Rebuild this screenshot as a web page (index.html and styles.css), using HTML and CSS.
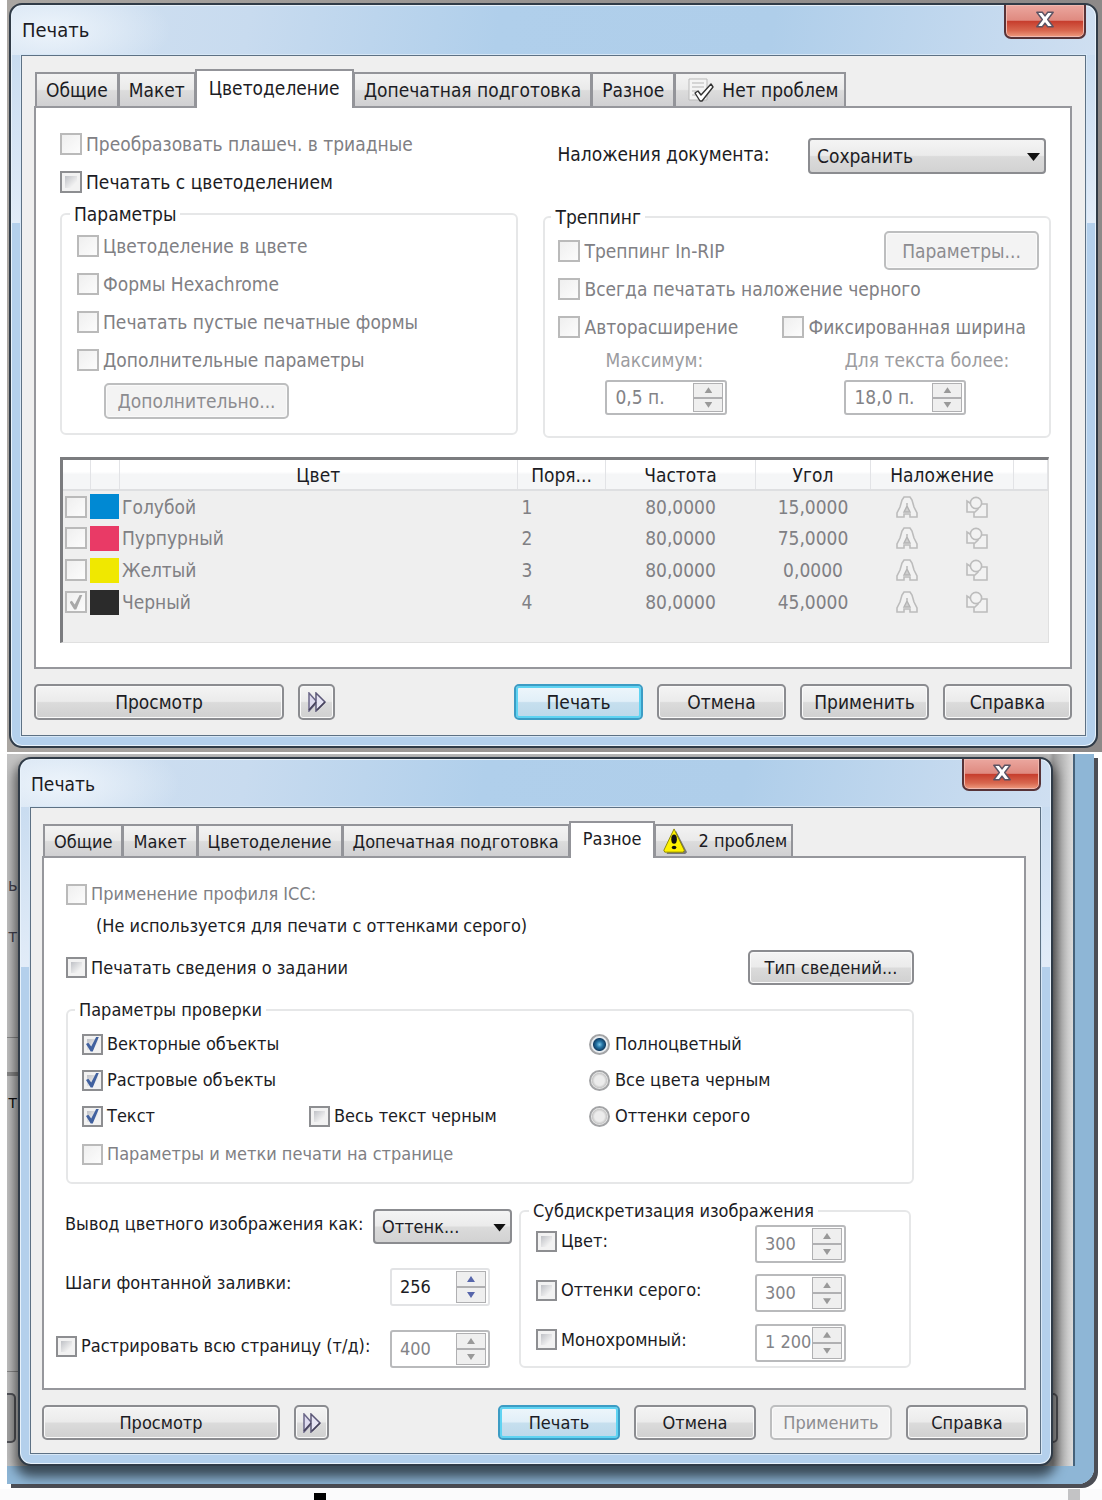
FILE: index.html
```html
<!DOCTYPE html>
<html lang="ru">
<head>
<meta charset="utf-8">
<title>Печать</title>
<meta name="viewport" content="width=device-width, initial-scale=1">
<link rel="stylesheet" href="styles.css">
</head>
<body>
<svg class="sprite" aria-hidden="true">
  <symbol id="i-close" viewBox="0 0 22 18"><path d="M2 1h6l3 4 3-4h6l-6 8 6 8h-6l-3-4-3 4H2l6-8z" fill="#fff" stroke="#5b5363" stroke-width="1.6" stroke-linejoin="round"/></symbol>
  <symbol id="i-next" viewBox="0 0 20 20"><path d="M2 1l8 9-8 9z" fill="#dedbef" stroke="#6b6788" stroke-width="1.5"/><path d="M9 1l9 9-9 9z" fill="#e6e4f3" stroke="#5c5878" stroke-width="1.5"/><path d="M10 18l8-8M2 18l7-8" fill="none" stroke="#47435c" stroke-width="1.5"/></symbol>
  <symbol id="i-ok" viewBox="0 0 26 24"><path d="M1 1h18v21H1z" fill="#f4f4f4" stroke="#b9b9b9"/><path d="M4 5h12M4 9h12M4 13h5M4 17h4" stroke="#b5b5b5"/><path d="M7 15l3-2 3 4L23 6l2 3-11 14h-2z" fill="#fff" stroke="#333" stroke-width="1.4" stroke-linejoin="round"/></symbol>
  <symbol id="i-warn" viewBox="0 0 26 28"><path d="M14 3l12 23-2 2H4z" fill="#777"/><path d="M12 1l11 23-1 2H2l-1-2z" fill="#fff200" stroke="#8a8500" stroke-linejoin="round"/><ellipse cx="12" cy="12" rx="3" ry="5" fill="#111"/><ellipse cx="12" cy="21" rx="2.5" ry="1.8" fill="#111"/></symbol>
  <symbol id="i-text" viewBox="0 0 22 22"><path d="M8 1h6l2 3 2 7 3 6v4h-7v-3H8v3H1v-4l3-6 2-7z" fill="#f2f2f2" stroke="#bcbcbc" stroke-width="1.6"/><path d="M11 7v3M11 10l-3 6h6z" fill="#cfcfcf" stroke="#b4b4b4" stroke-width="1.4"/></symbol>
  <symbol id="i-shape" viewBox="0 0 22 22"><path d="M8 8h13v13H8z" fill="#f2f2f2" stroke="#bcbcbc" stroke-width="1.6"/><path d="M1 5v11h8l3-3-2-2z" fill="#f2f2f2" stroke="#bcbcbc" stroke-width="1.6"/><circle cx="10" cy="7" r="5.6" fill="#f2f2f2" stroke="#bcbcbc" stroke-width="1.6"/></symbol>
</svg>

<main>
<div class="scene scene-first">
<section class="dialog" aria-label="Печать, цветоделение">
  <header class="titlebar">
    <h1>Печать</h1>
    <button class="close" type="button" aria-label="Закрыть"><svg><use href="#i-close"/></svg></button>
  </header>
  <form class="client">
    <div class="tabs" role="tablist">
      <button type="button" class="tab" role="tab">Общие</button>
      <button type="button" class="tab" role="tab">Макет</button>
      <button type="button" class="tab active" role="tab" aria-selected="true">Цветоделение</button>
      <button type="button" class="tab" role="tab">Допечатная подготовка</button>
      <button type="button" class="tab" role="tab">Разное</button>
      <button type="button" class="tab tab-status" role="tab"><svg><use href="#i-ok"/></svg>Нет проблем</button>
    </div>
    <div class="panel separations">
      <div class="columns">
        <div>
          <div class="stack">
            <label class="check"><input type="checkbox" disabled>Преобразовать плашеч. в триадные</label>
            <label class="check"><input type="checkbox">Печатать с цветоделением</label>
          </div>
          <fieldset class="options">
            <legend>Параметры</legend>
            <div class="stack">
              <label class="check"><input type="checkbox" disabled>Цветоделение в цвете</label>
              <label class="check"><input type="checkbox" disabled>Формы Hexachrome</label>
              <label class="check"><input type="checkbox" disabled>Печатать пустые печатные формы</label>
              <label class="check"><input type="checkbox" disabled>Дополнительные параметры</label>
            </div>
            <button type="button" class="btn btn-more" disabled>Дополнительно...</button>
          </fieldset>
        </div>
        <div>
          <div class="overprint">
            <label for="overprint">Наложения документа:</label>
            <span class="combo"><select id="overprint"><option>Сохранить</option></select></span>
          </div>
          <fieldset class="trapping">
            <legend>Треппинг</legend>
            <div class="rip">
              <label class="check"><input type="checkbox" disabled>Треппинг In-RIP</label>
              <button type="button" class="btn" disabled>Параметры...</button>
            </div>
            <label class="check always"><input type="checkbox" disabled>Всегда печатать наложение черного</label>
            <div class="pair">
              <div>
                <label class="check"><input type="checkbox" disabled>Авторасширение</label>
                <div class="limit">
                  <label for="maximum">Максимум:</label>
                  <span class="spin off"><input id="maximum" value="0,5 п." disabled><span class="arrows"><button type="button" class="up" aria-label="Больше" disabled></button><button type="button" class="down" aria-label="Меньше" disabled></button></span></span>
                </div>
              </div>
              <div>
                <label class="check"><input type="checkbox" disabled>Фиксированная ширина</label>
                <div class="limit limit-wide">
                  <label for="textsize">Для текста более:</label>
                  <span class="spin off"><input id="textsize" value="18,0 п." disabled><span class="arrows"><button type="button" class="up" aria-label="Больше" disabled></button><button type="button" class="down" aria-label="Меньше" disabled></button></span></span>
                </div>
              </div>
            </div>
          </fieldset>
        </div>
      </div>
      <div class="plates">
        <table>
          <colgroup><col class="c-check"><col class="c-swatch"><col><col class="c-order"><col class="c-freq"><col class="c-angle"><col class="c-over"><col class="c-end"></colgroup>
          <thead><tr><th></th><th></th><th>Цвет</th><th>Поря...</th><th>Частота</th><th>Угол</th><th>Наложение</th><th></th></tr></thead>
          <tbody>
            <tr><td><input type="checkbox" aria-label="Голубой" disabled></td><td><i class="swatch cyan"></i></td><td>Голубой</td><td>1</td><td>80,0000</td><td>15,0000</td><td><div class="over"><svg><use href="#i-text"/></svg><svg><use href="#i-shape"/></svg></div></td><td></td></tr>
            <tr><td><input type="checkbox" aria-label="Пурпурный" disabled></td><td><i class="swatch magenta"></i></td><td>Пурпурный</td><td>2</td><td>80,0000</td><td>75,0000</td><td><div class="over"><svg><use href="#i-text"/></svg><svg><use href="#i-shape"/></svg></div></td><td></td></tr>
            <tr><td><input type="checkbox" aria-label="Желтый" disabled></td><td><i class="swatch yellow"></i></td><td>Желтый</td><td>3</td><td>80,0000</td><td>0,0000</td><td><div class="over"><svg><use href="#i-text"/></svg><svg><use href="#i-shape"/></svg></div></td><td></td></tr>
            <tr><td><input type="checkbox" aria-label="Черный" checked disabled></td><td><i class="swatch black"></i></td><td>Черный</td><td>4</td><td>80,0000</td><td>45,0000</td><td><div class="over"><svg><use href="#i-text"/></svg><svg><use href="#i-shape"/></svg></div></td><td></td></tr>
          </tbody>
        </table>
      </div>
    </div>
    <footer class="actions">
      <button type="button" class="btn preview">Просмотр</button>
      <button type="button" class="btn expand" aria-label="Показать просмотр"><svg><use href="#i-next"/></svg></button>
      <button type="button" class="btn primary">Печать</button>
      <button type="button" class="btn">Отмена</button>
      <button type="button" class="btn">Применить</button>
      <button type="button" class="btn">Справка</button>
    </footer>
  </form>
</section>
</div>

<div class="scene scene-second">
<div class="behind" aria-hidden="true">
  <span class="piece piece-a">ь</span>
  <span class="piece piece-b">т</span>
  <span class="piece piece-c">т</span>
  <i class="rule rule-a"></i><i class="rule rule-b"></i><i class="rule rule-c"></i>
  <i class="stub stub-left"></i><i class="stub stub-right"></i>
</div>
<section class="dialog compact" aria-label="Печать, разное">
  <header class="titlebar">
    <h1>Печать</h1>
    <button class="close" type="button" aria-label="Закрыть"><svg><use href="#i-close"/></svg></button>
  </header>
  <form class="client">
    <div class="tabs" role="tablist">
      <button type="button" class="tab" role="tab">Общие</button>
      <button type="button" class="tab" role="tab">Макет</button>
      <button type="button" class="tab" role="tab">Цветоделение</button>
      <button type="button" class="tab" role="tab">Допечатная подготовка</button>
      <button type="button" class="tab active" role="tab" aria-selected="true">Разное</button>
      <button type="button" class="tab tab-status" role="tab"><svg><use href="#i-warn"/></svg>2 проблем</button>
    </div>
    <div class="panel misc">
      <div class="upper">
        <label class="check"><input type="checkbox" disabled>Применение профиля ICC:</label>
        <p class="note">(Не используется для печати с оттенками серого)</p>
        <div class="job">
          <label class="check"><input type="checkbox">Печатать сведения о задании</label>
          <button type="button" class="btn">Тип сведений...</button>
        </div>
        <fieldset class="proof">
          <legend>Параметры проверки</legend>
          <div class="proof-grid">
            <label class="check"><input type="checkbox" checked>Векторные объекты</label>
            <label class="check mode"><input type="radio" name="mode" checked>Полноцветный</label>
            <label class="check"><input type="checkbox" checked>Растровые объекты</label>
            <label class="check mode"><input type="radio" name="mode">Все цвета черным</label>
            <label class="check"><input type="checkbox" checked>Текст</label>
            <label class="check"><input type="checkbox">Весь текст черным</label>
            <label class="check mode"><input type="radio" name="mode">Оттенки серого</label>
            <label class="check marks"><input type="checkbox" disabled>Параметры и метки печати на странице</label>
          </div>
        </fieldset>
      </div>
      <div class="lower">
        <div class="output">
          <div class="line line-color"><label for="colorout">Вывод цветного изображения как:</label><span class="combo"><select id="colorout"><option>Оттенк...</option></select></span></div>
          <div class="line"><label for="steps">Шаги фонтанной заливки:</label><span class="spin live"><input id="steps" value="256"><span class="arrows"><button type="button" class="up" aria-label="Больше"></button><button type="button" class="down" aria-label="Меньше"></button></span></span></div>
          <div class="line line-raster"><label class="check"><input type="checkbox">Растрировать всю страницу (т/д):</label><span class="spin off"><input aria-label="Разрешение страницы" value="400" disabled><span class="arrows"><button type="button" class="up" aria-label="Больше" disabled></button><button type="button" class="down" aria-label="Меньше" disabled></button></span></span></div>
        </div>
        <fieldset class="sampling">
          <legend>Субдискретизация изображения</legend>
          <div class="line"><label class="check"><input type="checkbox">Цвет:</label><span class="spin off"><input aria-label="Цвет" value="300" disabled><span class="arrows"><button type="button" class="up" aria-label="Больше" disabled></button><button type="button" class="down" aria-label="Меньше" disabled></button></span></span></div>
          <div class="line"><label class="check"><input type="checkbox">Оттенки серого:</label><span class="spin off"><input aria-label="Оттенки серого" value="300" disabled><span class="arrows"><button type="button" class="up" aria-label="Больше" disabled></button><button type="button" class="down" aria-label="Меньше" disabled></button></span></span></div>
          <div class="line"><label class="check"><input type="checkbox">Монохромный:</label><span class="spin off"><input aria-label="Монохромный" value="1 200" disabled><span class="arrows"><button type="button" class="up" aria-label="Больше" disabled></button><button type="button" class="down" aria-label="Меньше" disabled></button></span></span></div>
        </fieldset>
      </div>
    </div>
    <footer class="actions">
      <button type="button" class="btn preview">Просмотр</button>
      <button type="button" class="btn expand" aria-label="Показать просмотр"><svg><use href="#i-next"/></svg></button>
      <button type="button" class="btn primary">Печать</button>
      <button type="button" class="btn">Отмена</button>
      <button type="button" class="btn" disabled>Применить</button>
      <button type="button" class="btn">Справка</button>
    </footer>
  </form>
</section>
</div>
<div class="page-edge"><i class="mark"></i><i class="guide"></i></div>
</main>
</body>
</html>
```
FILE: styles.css
```css
* { box-sizing: border-box; }

body {
  margin: 0;
  background: #fff;
  color: #1c1c24;
}

body, button, input, select {
  font-family: Tahoma, "DejaVu Sans Condensed", "Open Sans", sans-serif;
}

.sprite { position: absolute; width: 0; height: 0; }

/* Desktop strips */
.scene { margin-left: 7px; overflow: hidden; }
.scene-first {
  padding: 3px 4px 4px 2px;
  background: linear-gradient(90deg, #aaa6a2, #979391 50%, #8d8988);
}
.scene-second {
  position: relative;
  margin-top: 2px;
  padding: 3px 49px 23px 11px;
}

/* Window left behind the second dialog */
.behind {
  position: absolute;
  inset: 0 8px 5px 0;
  border: solid #8eb6d6;
  border-width: 0 19px 18px 0;
  border-radius: 0 0 16px 0;
  box-shadow: 4px 4px 0 #4c4e55;
  background: linear-gradient(90deg, #c2c2c2, #c6c6c6 12px, #bdbdbd calc(100% - 26px), #9b9b9b calc(100% - 22px), #dcdcdc calc(100% - 2px), #46627a calc(100% - 2px));
  font: 18px/24px "DejaVu Sans Condensed", sans-serif;
}
.piece { position: absolute; left: 1px; color: #46434f; }
.piece-a { top: 119px; }
.piece-b { top: 170px; }
.piece-c { top: 336px; color: #111; }
.rule { position: absolute; left: 0; width: 14px; height: 1px; background: #8a8a8a; }
.rule-a { top: 283px; }
.rule-b { top: 318px; height: 4px; }
.rule-c { top: 617px; }
.stub { position: absolute; top: 639px; height: 50px; border: 2px solid #55565b; background: #a6a6a6; }
.stub-left { left: 0; width: 9px; border-left: 0; border-radius: 0 5px 5px 0; }
.stub-right { right: 17px; width: 40px; border-radius: 5px; }

.page-edge {
  display: flex;
  justify-content: space-between;
  height: 11px;
  padding: 0 22px 0 314px;
  background: #fbfbfc;
}
.mark { width: 12px; height: 7px; margin-top: 4px; background: #000; }
.guide { width: 12px; background: #c3c3c5; }

/* Dialog frame */
.dialog {
  --text: 19px;
  --box: 22px;
  --split: 168px;
  --title: 50px;
  --control: 36px;
  --action: 129px;
  position: relative;
  padding: 0 10px 10px;
  border: 2px solid #303b47;
  border-radius: 13px;
  background:
    radial-gradient(120px 50px at 40px 25px, #edf4fb, transparent) 0 0 / 100% var(--title) no-repeat,
    linear-gradient(100deg, #d2e1f1, #c8dbef 22%, #b0cfeb 45%, #afceea 70%, #cfdff1) 0 0 / 100% var(--title) no-repeat,
    linear-gradient(#c9dcf0, #e2ecf8) 0 var(--title) / 100% var(--split) no-repeat,
    #b4d0ec;
  box-shadow: inset 0 0 0 1px #e8f2fb;
  font-size: var(--text);
}
.compact {
  --text: 18px;
  --box: 21px;
  --split: 160px;
  --title: 48px;
  --control: 35px;
  --action: 122px;
  box-shadow: inset 0 0 0 1px #e8f2fb, 0 8px 12px 3px rgb(0 0 0 / 60%);
}
.titlebar {
  display: flex;
  justify-content: space-between;
  align-items: flex-start;
  height: var(--title);
}
.titlebar h1 {
  margin: 0;
  padding-left: 1px;
  font-size: 20px;
  font-weight: 400;
  line-height: 50px;
}
.compact h1 { font-size: 19px; }
.close {
  display: grid;
  place-items: center;
  width: 82px;
  height: 34px;
  padding: 0 0 4px;
  border: 2px solid #573338;
  border-top: 0;
  border-radius: 0 0 7px 7px;
  background: linear-gradient(#eba79f, #df8a80 48%, #c63c2c 50%, #d8674f 80%, #ef9c80);
  box-shadow: inset 0 0 0 1px #f1b9b0;
}
.compact .close { width: 79px; height: 32px; }
.close svg { width: 20px; height: 17px; }

.client {
  margin: 0;
  padding: 13px 13px 15px 12px;
  border: 1px solid #5d7184;
  background: #efefef;
  box-shadow: 0 0 0 1px #d7e7f6;
}
.compact .client { padding: 13px 12px 13px 11px; }

/* Tabs */
.tabs { display: flex; align-items: flex-end; padding-left: 2px; }
.tab {
  height: 34px;
  margin: 0 0 0 -1px;
  padding: 0 9px;
  border: 2px solid #939499;
  border-bottom: 0;
  background: linear-gradient(#f3f3f3, #eaeaea 48%, #dcdcdc 52%, #d0d0d2);
  color: inherit;
  font-size: var(--text);
  line-height: 32px;
  white-space: nowrap;
}
.compact .tab { height: 32px; }
.tab.active {
  z-index: 1;
  height: 39px;
  margin-bottom: -2px;
  padding: 0 12px 4px;
  background: #fff;
}
.compact .tab.active { height: 37px; }
.tab-status { display: flex; align-items: center; gap: 8px; padding-left: 12px; padding-right: 6px; }
.compact .tab-status { padding-left: 6px; padding-right: 4px; gap: 10px; }
.tab-status svg { width: 26px; height: 26px; }

.panel { border: 2px solid #96979c; background: #fff; }
.compact .panel { margin-right: 2px; }

/* Controls */
.check {
  display: flex;
  align-items: center;
  gap: 4px;
  min-height: 24px;
  line-height: 24px;
  white-space: nowrap;
}
.check:has(input:disabled) { color: #808084; }
input[type="checkbox"] {
  appearance: none;
  display: grid;
  place-content: center;
  flex: none;
  width: var(--box);
  height: var(--box);
  margin: 0;
  padding: 3px;
  border: 2px solid #8d8e91;
  background: linear-gradient(135deg, #bfc1c6, #f2f2f2 75%) content-box, #f2f2f2;
}
input[type="checkbox"]:disabled { border-color: #bababa; background: linear-gradient(135deg, #efefef, #fcfcfc); }
input[type="checkbox"]:checked::before {
  content: "";
  width: 13px;
  height: 15px;
  background: #41619f;
  clip-path: polygon(0 50%, 18% 42%, 40% 66%, 80% 0, 100% 0, 52% 100%, 36% 100%);
}
input[type="checkbox"]:checked:disabled::before { background: #a9a9a9; }
input[type="radio"] {
  appearance: none;
  flex: none;
  width: 21px;
  height: 21px;
  margin: 0;
  border: 2px solid #a3a4a6;
  border-radius: 50%;
  background: radial-gradient(circle, #ececec 40%, #c9c9c9 60%, #f4f4f4 70%);
}
input[type="radio"]:checked {
  background: radial-gradient(circle, #7cc4e6 0, #2777a8 3px, #123f66 6px, #e6ebef 7px);
}

.btn {
  height: var(--control);
  padding: 0;
  border: 2px solid #8b8c90;
  border-radius: 5px;
  background: linear-gradient(#f4f4f4, #ebebeb 48%, #dbdbdb 52%, #d0d0d0);
  box-shadow: inset 0 0 0 1px #fafafa;
  color: inherit;
  font-size: var(--text);
  line-height: 24px;
}
.btn:disabled { border-color: #bdbebf; background: #f3f3f3; color: #8c8c90; }
.primary {
  border-color: #3c9cc4;
  background: linear-gradient(#eef6fb, #e1eff8 48%, #c6dfee 52%, #bcd8ea);
  box-shadow: inset 0 0 0 2px #5fd3f2;
}

.combo { position: relative; display: block; }
.combo::after {
  content: "";
  position: absolute;
  right: 6px;
  top: 50%;
  width: 13px;
  height: 8px;
  margin-top: -3px;
  background: #111;
  clip-path: polygon(0 0, 100% 0, 50% 100%);
  pointer-events: none;
}
select {
  appearance: none;
  width: 100%;
  height: var(--control);
  padding: 0 7px;
  border: 2px solid #8b8c90;
  border-radius: 4px;
  background: linear-gradient(#f4f4f4, #ebebeb 48%, #dbdbdb 52%, #d2d2d2);
  color: inherit;
  font-size: var(--text);
}

.spin {
  display: flex;
  width: 122px;
  height: 35px;
  padding: 1px 2px;
  border: 2px solid #b9babc;
  border-radius: 3px;
  background: #fff;
}
.spin input {
  flex: 1;
  min-width: 0;
  padding: 0 0 2px 6px;
  border: 0;
  background: none;
  color: inherit;
  font-size: var(--text);
}
.spin.live { border-color: #e2e3e5; }
.spin.off input { color: #838387; }
.arrows { display: flex; flex: none; flex-direction: column; width: 30px; }
.arrows button {
  display: grid;
  place-items: center;
  flex: 1;
  padding: 0;
  border: 1px solid #b0b0b2;
  background: #efefef;
}
.arrows button::before { content: ""; width: 8px; height: 6px; background: #999; }
.arrows .up::before { clip-path: polygon(50% 0, 100% 100%, 0 100%); }
.arrows .down::before { clip-path: polygon(0 0, 100% 0, 50% 100%); }
.live .arrows button::before { background: #5766ab; }

fieldset {
  min-width: 0;
  margin: 0;
  padding: 0;
  border: 2px solid #e6e7e8;
  border-radius: 6px;
}
legend { margin-left: -7px; padding: 0 4px; line-height: 22px; }

/* Separations tab */
.separations { padding: 24px 19px 24px 24px; }
.columns {
  display: grid;
  grid-template-columns: 458fr 507fr;
  gap: 25px;
  align-items: start;
}
.stack { display: grid; gap: 14px; justify-items: start; }
.options { margin-top: 9px; padding: 9px 12px 14px 15px; }
.btn-more { width: 185px; margin: 11px 0 0 27px; display: block; }
.overprint {
  display: flex;
  justify-content: space-between;
  margin: 6px 5px 32px 14px;
  line-height: 32px;
}
.overprint .combo { width: 238px; line-height: normal; }
.trapping { padding: 3px 10px 21px 13px; }
.rip { display: flex; justify-content: space-between; align-items: center; }
.rip .btn { width: 155px; height: 39px; }
.always { margin: 7px 0 14px; }
.pair { display: grid; grid-template-columns: 224px 1fr; }
.limit { display: grid; gap: 9px; margin-top: 10px; padding-left: 47px; color: #9c9ca0; line-height: 22px; white-space: nowrap; }
.limit-wide { padding-left: 62px; }

.plates {
  margin: 19px 2px 0 0;
  padding-bottom: 24px;
  border: solid #e0e0e0;
  border-width: 3px 1px 1px 3px;
  border-top-color: #7b7c7f;
  border-left-color: #7b7c7f;
  background: #efefef;
}
table { width: 100%; border-collapse: collapse; table-layout: fixed; }
.c-check { width: 27px; }
.c-swatch { width: 29px; }
.c-order { width: 88px; }
.c-freq { width: 150px; }
.c-angle { width: 115px; }
.c-over { width: 143px; }
.c-end { width: 34px; }
th {
  height: 30px;
  padding: 0;
  border-right: 1px solid #e2e3e6;
  border-bottom: 2px solid #dedfe1;
  background: linear-gradient(#fff 40%, #f5f6f7 50%);
  font-weight: 400;
}
td { height: 32px; padding: 0; color: #808084; text-align: center; }
td:nth-child(3) { padding-left: 3px; text-align: left; }
td:nth-child(4) { padding-left: 4px; text-align: left; }
td input[type="checkbox"] { margin-left: 2px; }
.swatch { display: block; height: 25px; }
.cyan { background: #0089d3; }
.magenta { background: #e93a66; }
.yellow { background: #f0e800; }
.black { background: #2b2b2b; }
.over { display: flex; justify-content: center; gap: 48px; }
.over svg { width: 22px; height: 22px; }

/* Misc tab */
.misc { padding: 24px 110px 20px 12px; }
.upper { padding-left: 10px; }
.note { margin: 9px 0 13px 30px; line-height: 22px; white-space: nowrap; }
.job { display: flex; justify-content: space-between; align-items: center; }
.job .btn { width: 166px; }
.proof { margin-top: 14px; padding: 11px 14px 16px; }
.proof-grid { display: grid; grid-template-columns: 227px 280px 1fr; gap: 12px 0; }
.mode { grid-column: 3; gap: 5px; }
.marks { grid-column: 1 / -1; margin-top: 2px; }
.lower { display: grid; grid-template-columns: 463px 1fr; margin: 16px 3px 0 0; }
.line { display: flex; justify-content: space-between; line-height: 30px; white-space: nowrap; }
.output { display: grid; align-content: start; gap: 24px; padding: 9px 29px 0 9px; }
.line-color { margin-right: -22px; }
.line-color .combo { width: 139px; line-height: normal; }
.line-raster { margin-left: -9px; }
.line .check { height: 32px; }
.compact .spin { width: 91px; height: 38px; }
.compact .output .spin { width: 100px; }
.sampling { display: grid; gap: 11px; padding: 3px 63px 4px 15px; }

/* Footer buttons */
.actions { display: flex; gap: 14px; margin-top: 15px; }
.actions .btn { width: var(--action); }
.actions .preview { width: 250px; }
.actions .expand { display: grid; place-items: center; width: 37px; margin-right: auto; }
.expand svg { width: 20px; height: 20px; }
.actions .expand + .btn { margin-left: 0; }
.compact .actions .preview { width: 238px; }
.compact .actions .expand { width: 35px; }
```
